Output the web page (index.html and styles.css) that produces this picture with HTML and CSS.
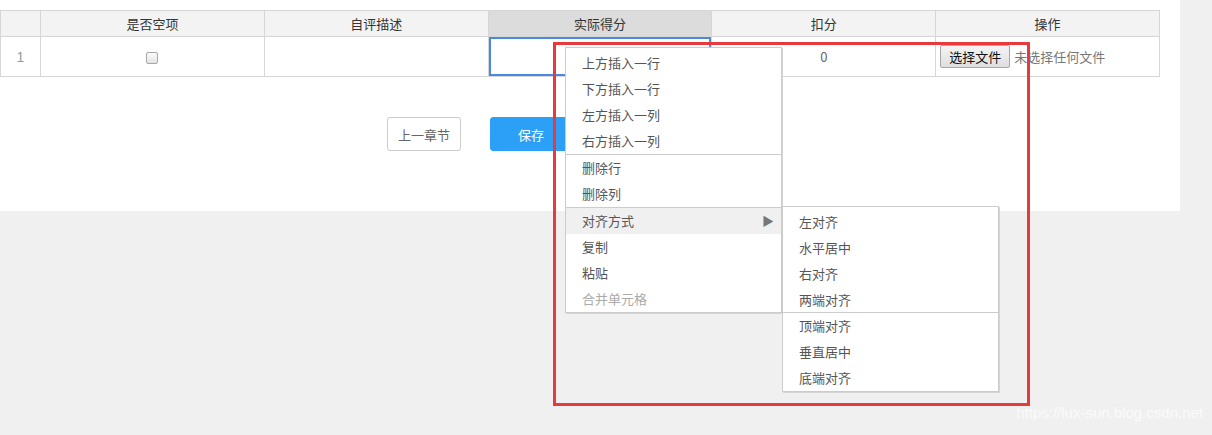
FILE: index.html
```html
<!DOCTYPE html>
<html lang="zh-CN">
<head>
    <meta charset="UTF-8">
    <title>自评表</title>
    <link rel="stylesheet" href="styles.css">
</head>
<body>
    <div class="panel">
        <!-- 评分表 -->
        <table class="grid">
            <thead>
                <tr>
                    <th class="col-index"></th>
                    <th>是否空项</th>
                    <th>自评描述</th>
                    <th class="current">实际得分</th>
                    <th>扣分</th>
                    <th>操作</th>
                </tr>
            </thead>
            <tbody>
                <tr>
                    <td class="row-index">1</td>
                    <td><span class="check"></span></td>
                    <td></td>
                    <td class="current"></td>
                    <td>0</td>
                    <td class="file-cell">
                        <span class="file-btn">选择文件</span>
                        <span class="file-name">未选择任何文件</span>
                    </td>
                </tr>
            </tbody>
        </table>

        <div class="actions">
            <button class="btn btn-default">上一章节</button>
            <button class="btn btn-primary">保存</button>
        </div>
    </div>

    <!-- 右键菜单 -->
    <ul class="context-menu">
        <li>上方插入一行</li>
        <li>下方插入一行</li>
        <li>左方插入一列</li>
        <li>右方插入一列</li>
        <li class="sep">删除行</li>
        <li>删除列</li>
        <li class="sep active">对齐方式<span class="arrow">&#9654;</span></li>
        <li>复制</li>
        <li>粘贴</li>
        <li class="disabled">合并单元格</li>
    </ul>

    <ul class="context-menu submenu">
        <li>左对齐</li>
        <li>水平居中</li>
        <li>右对齐</li>
        <li class="short">两端对齐</li>
        <li class="sep">顶端对齐</li>
        <li>垂直居中</li>
        <li>底端对齐</li>
    </ul>

    <div class="mark"></div>
    <div class="watermark">https://lux-sun.blog.csdn.net</div>
</body>
</html>
```

FILE: styles.css
```css
/* General */
body {
    margin: 0;
    width: 1212px;
    height: 435px;
    background: #f0f0f0;
    font-family: "Noto Sans CJK SC", "Liberation Sans", sans-serif;
    font-size: 13px;
    color: #333;
    position: relative;
    overflow: hidden;
}

.panel {
    width: 1180px;
    height: 211px;
    box-sizing: border-box;
    padding-top: 10px;
    background: #fff;
}

/* Table */
.grid {
    width: 1160px;
    border-collapse: collapse;
    table-layout: fixed;
}

.grid th,
.grid td {
    border: 1px solid #d6d6d6;
    text-align: center;
    padding: 0;
}

.grid th {
    height: 25px;
    background: #f3f3f3;
    font-weight: normal;
    color: #333;
    line-height: 25px;
}

.grid th.col-index {
    width: 39px;
}

.grid th.current {
    background: #dcdcdc;
}

.grid td {
    height: 39px;
    color: #666;
}

.grid td.row-index {
    color: #999;
    font-family: "Liberation Sans", sans-serif;
    font-size: 14px;
}

.grid td.current {
    box-shadow: inset 0 0 0 2px #4b89e0;
}

.check {
    display: inline-block;
    width: 10px;
    height: 10px;
    border: 1px solid #a8a8a8;
    border-radius: 2px;
    background: linear-gradient(#fbfbfb, #e4e4e4);
    vertical-align: middle;
}

.grid td.file-cell {
    text-align: left;
    padding-left: 4px;
}

.file-btn {
    display: inline-block;
    padding: 0 8px;
    height: 21px;
    line-height: 21px;
    border: 1px solid #a6a6a6;
    border-radius: 2px;
    background: linear-gradient(#f4f4f4, #dedede);
    color: #111;
}

.file-name {
    color: #777;
    margin-left: 1px;
}

/* Buttons */
.actions {
    display: flex;
    gap: 29px;
    padding-left: 387px;
    margin-top: 40px;
}

.btn {
    height: 34px;
    width: 74px;
    border-radius: 3px;
    font-family: "Noto Sans CJK SC", sans-serif;
    font-size: 13px;
    cursor: pointer;
}

.btn-default {
    background: #fff;
    border: 1px solid #ccc;
    color: #666;
}

.btn-primary {
    width: 82px;
    background: #2ba0f6;
    border: 1px solid #2ba0f6;
    color: #fff;
}

/* Context menu */
.context-menu {
    position: absolute;
    left: 565px;
    top: 47px;
    width: 215px;
    margin: 0;
    padding: 2px 0 0;
    list-style: none;
    background: #fff;
    border: 1px solid #ccc;
    box-shadow: 1px 1px 0 #d4d4d4;
}

.context-menu li {
    height: 26px;
    line-height: 26px;
    padding-left: 16px;
    color: #555;
    position: relative;
}

.context-menu li.sep {
    border-top: 1px solid #ccc;
}

.context-menu li.active {
    background: #f0f0f0;
}

.context-menu li.disabled {
    color: #aaa;
}

.arrow {
    position: absolute;
    right: 7px;
    top: 0;
    font-size: 12px;
    color: #777;
}

.submenu {
    left: 782px;
    top: 206px;
}

.submenu li.short {
    height: 25px;
    line-height: 25px;
}

/* Annotation */
.mark {
    position: absolute;
    left: 553px;
    top: 42px;
    width: 471px;
    height: 358px;
    border: 3px solid #e8393f;
}

.watermark {
    position: absolute;
    right: 9px;
    top: 404px;
    font-family: "Liberation Sans", sans-serif;
    font-size: 15px;
    color: #fbfbfb;
}
```
